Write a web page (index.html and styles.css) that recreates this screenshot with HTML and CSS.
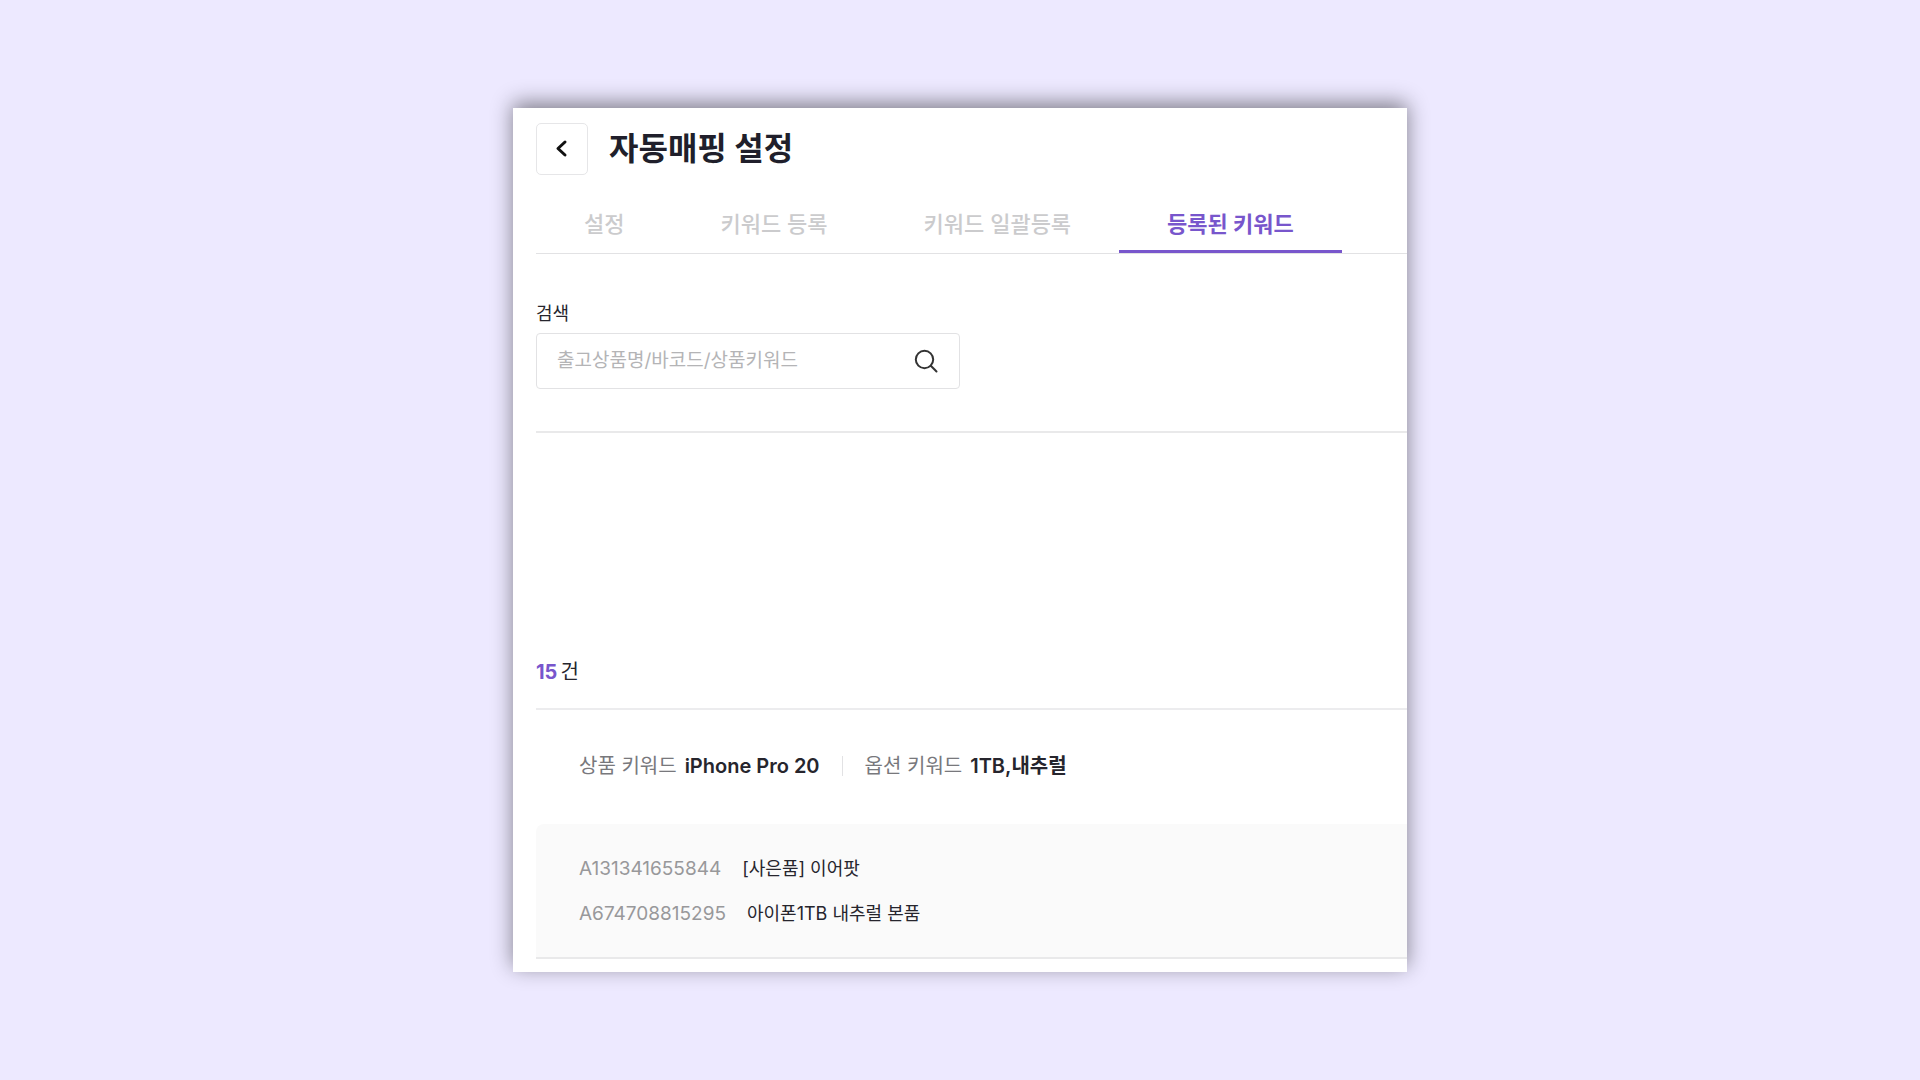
FILE: index.html
```html
<!DOCTYPE html>
<html lang="ko">
<head>
  <meta charset="UTF-8">
  <meta name="viewport" content="width=device-width, initial-scale=1.0">
  <title>자동매핑 설정</title>
  <link rel="stylesheet" href="styles.css">
</head>
<body>
  <main class="container">
    <header class="page-header">
      <button type="button" class="back-button" aria-label="뒤로">
        <svg width="20" height="20" viewBox="0 0 20 20" fill="none" stroke="#111" stroke-width="3" stroke-linecap="round" stroke-linejoin="round">
          <path d="M13 3 L6 9.5 L13 16"/>
        </svg>
      </button>
      <h1>자동매핑 설정</h1>
    </header>

    <nav class="tabs">
      <a href="#" class="tab">설정</a>
      <a href="#" class="tab">키워드 등록</a>
      <a href="#" class="tab">키워드 일괄등록</a>
      <a href="#" class="tab active" aria-current="page">등록된 키워드</a>
    </nav>

    <form class="search">
      <label for="keyword">검색</label>
      <div class="search-box">
        <input type="text" id="keyword" placeholder="출고상품명/바코드/상품키워드">
        <button type="button" class="search-button" aria-label="검색">
          <svg width="24" height="24" viewBox="0 0 24 24" fill="none" stroke="#333" stroke-width="2" stroke-linecap="round">
            <circle cx="10.5" cy="10.5" r="8.7"/>
            <path d="M16.8 16.8 L22.5 22.5"/>
          </svg>
        </button>
      </div>
    </form>

    <section class="results">
      <p class="count"><strong>15</strong>건</p>
      <div class="keywords">
        <p class="keyword"><span>상품 키워드</span><strong>iPhone Pro 20</strong></p>
        <p class="keyword"><span>옵션 키워드</span><strong>1TB,내추럴</strong></p>
      </div>
      <ul class="products">
        <li><span class="code">A131341655844</span><span>[사은품] 이어팟</span></li>
        <li><span class="code">A674708815295</span><span>아이폰1TB 내추럴 본품</span></li>
      </ul>
    </section>
  </main>
</body>
</html>
```
FILE: styles.css
```css
* {
  box-sizing: border-box;
}

body {
  display: flex;
  align-items: center;
  justify-content: center;
  min-height: 100vh;
  margin: 0;
  background-color: #ede9ff;
  color: #26252d;
  font-family: Inter, "Noto Sans CJK KR", sans-serif;
  font-size: 18px;
  line-height: 24px;
}

h1,
p,
ul {
  margin: 0;
  padding: 0;
}

button,
input {
  font: inherit;
}

.container {
  width: 100%;
  max-width: 894px;
  padding: 15px 0 13px 23px;
  background-color: #fff;
  box-shadow: 0 -5px 20px rgba(0, 0, 0, 0.46);
}

.page-header {
  display: flex;
  align-items: center;
  gap: 21px;
}

.back-button {
  display: flex;
  align-items: center;
  justify-content: center;
  width: 52px;
  height: 52px;
  padding: 0;
  border: 1px solid #e6e6e8;
  border-radius: 5px;
  background-color: #fff;
  cursor: pointer;
}

h1 {
  color: #201f2b;
  font-size: 32px;
  font-weight: 700;
  line-height: 48px;
}

.tabs {
  display: flex;
  margin-top: 21px;
  border-bottom: 1px solid #e2e2e4;
}

.tab {
  padding: 14px 48px 12px;
  border-bottom: 3px solid transparent;
  color: #cbcbcd;
  font-size: 22px;
  font-weight: 500;
  line-height: 28px;
  text-decoration: none;
}

.tab.active {
  border-color: #7856cc;
  color: #7856cc;
  font-weight: 700;
}

.search {
  padding: 48px 0 42px;
  border-bottom: 2px solid #e9e9ea;
}

.search-box {
  display: flex;
  align-items: center;
  width: 424px;
  max-width: 100%;
  height: 56px;
  margin-top: 7px;
  padding: 0 21px 0 20px;
  border: 1px solid #e2e2e4;
  border-radius: 4px;
}

.search-box input {
  flex: 1;
  min-width: 0;
  padding: 0;
  border: none;
  outline: none;
  color: inherit;
  font-size: 19px;
}

.search-box input::placeholder {
  color: #b4b4b6;
}

.search-button {
  display: flex;
  padding: 0;
  border: none;
  background: none;
  cursor: pointer;
}

.results {
  padding-top: 225px;
}

.count {
  padding-bottom: 22px;
  border-bottom: 2px solid #ececee;
  font-size: 20px;
  line-height: 28px;
}

.count strong {
  margin-right: 3px;
  color: #7856cc;
}

.keywords {
  display: flex;
  align-items: center;
  padding: 42px 0 44px 43px;
  font-size: 20px;
  line-height: 28px;
}

.keyword {
  display: flex;
  gap: 8px;
}

.keyword span {
  color: #78787c;
}

.keyword strong {
  font-weight: 600;
}

.keyword + .keyword::before {
  content: "";
  align-self: center;
  width: 1px;
  height: 20px;
  margin: 0 14px 0 22px;
  background-color: #e2e2e4;
}

.products {
  display: flex;
  flex-direction: column;
  gap: 21px;
  padding: 33px 0 31px 43px;
  border-bottom: 2px solid #e9e9ea;
  border-top-left-radius: 8px;
  background-color: #fafafa;
  list-style: none;
}

.products li {
  display: flex;
  gap: 21px;
}

.code {
  color: #98989a;
  font-size: 19px;
}
```
